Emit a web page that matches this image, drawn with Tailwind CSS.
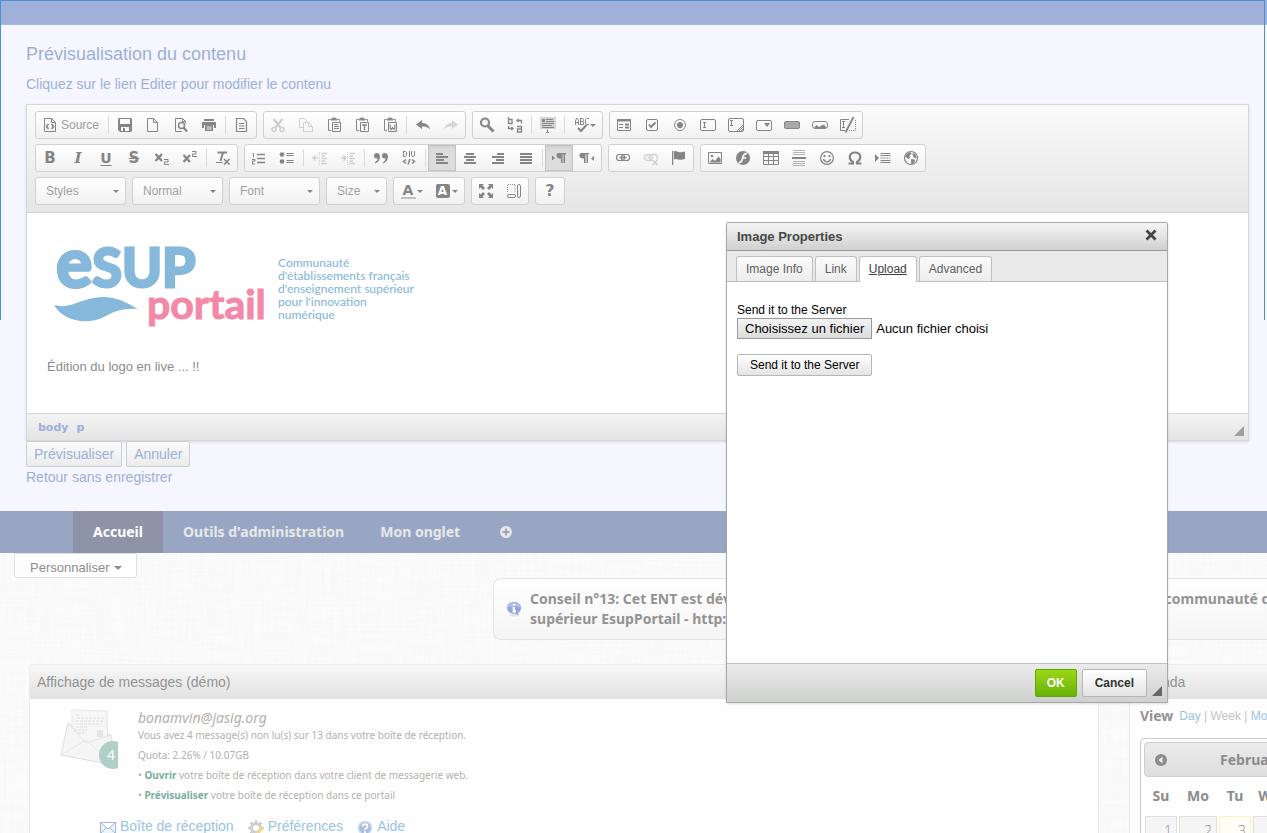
<!DOCTYPE html>
<html lang="fr">
<head>
<meta charset="utf-8">
<meta name="viewport" content="width=device-width, initial-scale=1">
<title>Prévisualisation du contenu</title>
<script src="https://cdn.jsdelivr.net/npm/@tailwindcss/browser@4"></script>
</head>
<body class="relative h-screen overflow-hidden bg-[#f9f9f9] font-['Liberation_Sans',sans-serif] text-sm text-[#8c8c8c]">

<!-- Icon set, 16 x 16 grid -->
<svg class="hidden" aria-hidden="true">
  <defs>
    <g id="source" fill="none" stroke="currentColor"><path d="M2.5 1.5h7l4 4v9h-11zM9.500 1.500v4h4"/><path stroke-width="1.600" d="M6.500 7 4.500 9.500l2 2.500M9.500 7l2 2.500-2 2.500"/></g>
    <g id="save"><path fill-rule="evenodd" fill="currentColor" d="M2 1h12l1 1v12l-1 1H3l-2-2V2zM3 2v5h10V2zM4 10v4h2v-3h2v3h4v-4z"/></g>
    <g id="newpage" fill="none" stroke="currentColor"><path d="M2.5 1.5h6l4 4v9h-10zM8.500 1.500v4h4"/></g>
    <g id="preview" fill="none" stroke="currentColor"><path d="M9 14.500H2.500v-13h7l3 3v2M9.500 1.500v3h3"/><circle cx="8.500" cy="8.500" r="3" stroke-width="1.500"/><path stroke-width="2" d="m10.500 10.500 3.500 4"/></g>
    <g id="print"><path fill="currentColor" fill-rule="evenodd" d="M3 2h10v2H3zM1 5h14v6h-2v-3H3v3H1z"/><path fill="currentColor" fill-rule="evenodd" d="M4 8h8v6H4zm1.500 1.500v1h5v-1zm0 2v1h5v-1z"/></g>
    <g id="templates" fill="none" stroke="currentColor"><path d="M2.500 1.500h7l3 3v10h-10zM5 6.500h5M5 9h5.500M5 11.500h5.500" stroke-width="1.200"/></g>
    <g id="cut" fill="none" stroke="currentColor" stroke-width="1.600"><circle cx="4" cy="12.500" r="2"/><circle cx="12" cy="12.500" r="2"/><path stroke-width="2.200" d="M3.500 2 10.500 10.500M12.500 2 5.500 10.500"/></g>
    <g id="copy" fill="none" stroke="currentColor"><path d="M5 10.500H1.500v-9h5l2.500 2.500v1"/><path d="M5.500 5.500h5l4 4v5h-9zM10.500 5.500v4h4"/></g>
    <g id="clip" fill="none" stroke="currentColor"><path d="M4.500 2.500h-2v11H5M11.500 2.500h2v2"/><path stroke-width="1.800" d="M5 2.500h6M6.500 1.500h3"/><path d="M6.500 5.500h8v9h-8z"/></g>
    <g id="paste"><use href="#clip"/><path stroke="currentColor" d="M8 7.500h4M8 9.500h5M8 11.500h5"/></g>
    <g id="pastetext"><use href="#clip"/><path stroke="currentColor" stroke-width="1.300" fill="none" d="M8 8h5M10.500 8v5"/></g>
    <g id="pasteword"><use href="#clip"/><path stroke="currentColor" stroke-width="1.200" fill="none" d="M8.200 7.500v4l1 1 1.300-2 1.300 2 1-1v-4"/></g>
    <g id="undo"><path fill="currentColor" d="M1 7.500 7 3v3c4.500 0 7 2.500 8 6.500-2-2.500-4.500-3-8-3V12z"/></g>
    <g id="redo"><path fill="currentColor" d="M15 7.500 9 3v3c-4.500 0-7 2.500-8 6.500 2-2.500 4.500-3 8-3V12z"/></g>
    <g id="find" fill="none" stroke="currentColor"><circle cx="6" cy="5.500" r="4" stroke-width="2.200"/><path stroke-width="3" d="m9 9 5.500 5.500"/></g>
    <g id="replace" fill="none" stroke="currentColor" stroke-width="1.300"><path d="M1.500 0v6.500h3.500v-4H1.500M10 9.500h4.500v5.500H10.500v-3h4M14.500 6.500v-3H10M11.500 2 10 3.500 11.500 5M1.500 9v2.500H6M4.500 10 6 11.500 4.500 13"/></g>
    <g id="selectall"><path fill="#d4d4d4" d="M0 0h16v12H0z"/><path stroke="currentColor" fill="none" d="M6 2.500h7M6 4.500h8M2 6.500h12M2 8.500h10M2 10.500h12M7.500 12.500v3M6 15.500h3"/><path fill="currentColor" d="M2 2h3v3H2z"/></g>
    <g id="spell" fill="none" stroke="currentColor"><path d="M1.500 8V3.500L2.500 1.500h1l1 2V8M1.500 5.500h3M6.500 1v7M6.500 1.500h2.500l.5 1v1l-.5 1h-2.500M9 4.500l.5 1v2H6.500M15 1.500h-2.500l-1 1v4l1 1H15"/><path stroke-width="2" d="m4 11 3 3 5.500-6"/></g>
    <g id="form" fill="none" stroke="currentColor"><path d="M1.500 2.500h13v11h-13zM3 7.500h4M3 10.500h4"/><path stroke-width="2" d="M1 3.500h14M9 7.500h4M9 10.500h4"/></g>
    <g id="checkbox" fill="none" stroke="currentColor"><rect x="2.500" y="2.500" width="11" height="11" rx="1.500"/><path stroke-width="2" d="m5 7.500 2 2.500 4.500-4.500"/></g>
    <g id="radio" stroke="currentColor"><circle cx="8" cy="8" r="5.500" fill="none"/><circle cx="8" cy="8" r="2.600" fill="currentColor"/></g>
    <g id="textfield" fill="none" stroke="currentColor"><rect x=".5" y="2.500" width="15" height="11" rx="1.500"/><path d="M3 5.500h3M4.500 5.500v5M3 10.500h3"/></g>
    <g id="textarea" fill="none" stroke="currentColor"><rect x=".5" y="1.500" width="15" height="13" rx="1.500"/><path d="M2 3.500h3M3.500 3.500v5M2 8.500h3M9 14l6-6M11 14l4-4M13 14l2-2"/></g>
    <g id="select"><rect x=".5" y="3.500" width="15" height="10" rx="1.500" fill="none" stroke="currentColor"/><path fill="currentColor" d="M8 6h6l-3 4z"/></g>
    <g id="button"><rect x=".5" y="4.500" width="15" height="7" rx="1.500" fill="#a8a8a8" stroke="currentColor"/></g>
    <g id="imgbutton"><rect x=".5" y="4.500" width="15" height="7" rx="2.500" fill="none" stroke="currentColor"/><path fill="currentColor" d="m2 11 2.500-3L7 10l2.500-1.500L12 7.500l2.500 3.500z"/></g>
    <g id="hidden" fill="none" stroke="currentColor"><path d="M9 2.500H.5v11H5M2 4.500h3M3.500 4.500v6M2 10.500h3"/><path stroke-dasharray="1 1" d="M9 13.500h6.500V2"/><path stroke-width="1.800" d="M13.500 0 5.500 15.500"/></g>
    <g id="sub" stroke="currentColor" fill="none"><path stroke-width="2.200" d="m1.500 4 6.500 7M8 4 1.500 11"/><path d="M10 9.500h4v2.500h-3.500v2.500H15"/></g>
    <g id="sup" stroke="currentColor" fill="none"><path stroke-width="2.200" d="m1.500 5 6.500 7M8 5 1.500 12"/><path d="M10 1.500h4V4h-3.500v2.500H15"/></g>
    <g id="removeformat" stroke="currentColor" fill="none"><path stroke-width="2" d="M2.500 2.500h9.500M8 2.500 5.500 11"/><path d="M1 12.500h6.500"/><path stroke-width="1.700" d="m9 9 5.500 5.500m0-5.500L9 14.500"/></g>
    <g id="ol" stroke="currentColor" fill="none"><path d="M1.500 3.500h1v4M1 9.500h3V11H1.500v3H4"/><path stroke-width="1.600" d="M6 4.500h8M6 8.500h8M6 12.500h8"/></g>
    <g id="ul"><circle cx="3" cy="4.500" r="2.300" fill="currentColor"/><circle cx="3" cy="11.500" r="2.300" fill="currentColor"/><path stroke="currentColor" d="M7.500 3.500h7M7.500 5.500h7M7.500 10.500h7M7.500 12.500h7"/></g>
    <g id="outdent" fill="none" stroke="currentColor"><path d="M7.500 2v13" stroke-dasharray="1 1"/><path stroke-width="1.300" d="M9.500 3.500H15M9.500 6H13M9.500 8.500H15M9.500 11H13M9.500 13.500H15M6 8H1M3.500 5.500 1 8l2.500 2.500"/></g>
    <g id="indent" fill="none" stroke="currentColor"><path d="M7.500 2v13" stroke-dasharray="1 1"/><path stroke-width="1.300" d="M9.500 3.500H15M9.500 6H13M9.500 8.500H15M9.500 11H13M9.500 13.500H15M1 8h5M3.500 5.500 6 8l-2.500 2.500"/></g>
    <g id="quote" fill="currentColor"><path d="M3.500 3C5.800 3 7 4.500 7 6.800 7 10 5 12.500 2 13.500v-1.200C3.700 11.300 4.600 10 4.600 8.500 2.500 8.900 1 7.800 1 5.800 1 4.200 2 3 3.500 3zM11.500 3C13.800 3 15 4.500 15 6.800c0 3.200-2 5.700-5 6.700v-1.200c1.700-1 2.600-2.300 2.600-3.800C10.500 8.900 9 7.800 9 5.800 9 4.200 10 3 11.500 3z"/></g>
    <g id="div" fill="none" stroke="currentColor"><path d="M2.500 1v5M2.500 1.500h2l1 1v3l-1 1h-2zM8.500 1v6M10.500 1v4l1 1.500h1l1-1.500V1"/><path stroke-width="1.500" d="M5 9.500 2.500 11.500 5 13.500M11 9.500l2.500 2-2.500 2M9 9l-2 5.500"/></g>
    <g id="left" fill="none" stroke="currentColor" stroke-width="2"><path d="M2 4h7M2 7h12M2 10h8M2 13h12"/></g>
    <g id="center" fill="none" stroke="currentColor" stroke-width="2"><path d="M4 4h8M2 7h12M4 10h8M2 13h12"/></g>
    <g id="right" fill="none" stroke="currentColor" stroke-width="2"><path d="M7 4h7M2 7h12M6 10h8M2 13h12"/></g>
    <g id="justify" fill="none" stroke="currentColor" stroke-width="2"><path d="M2 4h12M2 7h12M2 10h12M2 13h12"/></g>
    <g id="pilcrow"><path fill="currentColor" d="M5 3h8v1.200h-1V13h-1.500V4.200H9.500V13H8V8.500H7C5 8.500 3.500 7.500 3.500 5.700 3.500 4.200 4.200 3 5 3z"/></g>
    <g id="ltr"><use href="#pilcrow" x="2"/><path fill="currentColor" d="M1 5.500v5l3-2.500z"/></g>
    <g id="rtl"><use href="#pilcrow" x="-3"/><path fill="currentColor" d="M15 6v5l-3-2.500z"/></g>
    <g id="link" fill="none" stroke="currentColor" stroke-width="1.100"><rect x="1.500" y="4.500" width="8" height="6" rx="2.800"/><rect x="6.500" y="4.500" width="8" height="6" rx="2.800"/><path stroke-width="1.500" d="M4.500 7.500h7"/></g>
    <g id="unlink" fill="none" stroke="currentColor" stroke-width="1.300"><path d="M9.500 9.500c-1 1-2 1-4 1-2.500 0-4-1-4-3s1.500-3 4-3c1.500 0 3 0 4 1M7 9.500c-1-2 0-5 3-5h1.500c2 0 3 1.500 3 3 0 1-.5 1.500-1 2M4.500 7.500h6"/><path stroke-width="1.700" d="m9.500 10 5 5m0-5-5 5"/></g>
    <g id="anchor"><path fill="currentColor" d="M1 1h1.300v14H1zM3 1.500c2.500-1.500 4 1 6 .8 2 .2 3-.8 5-.8V9c-2 0-3 1-5 .8C7 9.800 5.500 8 3 9.500z"/></g>
    <g id="image"><path fill="none" stroke="currentColor" d="M1.500 2.500h13v11h-13z"/><circle cx="5" cy="6" r="1.300" fill="currentColor"/><path fill="currentColor" d="m2.500 12.500 3-3.500L8 11l3.500-4.500 2 2.500v3.500z"/></g>
    <g id="flash"><circle cx="8" cy="8" r="7" fill="currentColor"/><path fill="none" stroke="#f6f6f6" stroke-width="1.800" d="M12 3.500C8 3.500 8 7 7.500 8.500 7 11 6 12.500 4 12.500M7 7.800h4"/></g>
    <g id="table" fill="none" stroke="currentColor"><path stroke-width="3" d="M0 2.500h16"/><path d="M.5 4v10.500h15V4M.5 6.500h15M.5 10.500h15M5.500 4v10.500M10.500 4v10.500"/></g>
    <g id="hr" fill="none" stroke="currentColor"><path opacity=".6" d="M2 .5h12M2 2.500h12M2 4.500h12M2 11.500h12M2 13.500h12M2 15.500h12"/><path stroke-width="2" d="M1 8h14"/></g>
    <g id="smiley" fill="none" stroke="currentColor" stroke-width="1.200"><circle cx="8" cy="8" r="6.400"/><path d="M4.500 9c.7 2 2 2.800 3.500 2.800S10.800 11 11.500 9"/><path stroke-width="2" d="M5.500 5v2M10.500 5v2"/></g>
    <g id="omega" fill="none" stroke="currentColor" stroke-width="2.200"><path d="M1.500 13.500H6V12C1 9 2 2.500 8 2.500S15 9 10 12v1.500h4.500"/></g>
    <g id="pagebreak"><path fill="currentColor" d="M0 4v8l4-4z"/><path fill="none" stroke="currentColor" d="M5.500 3.500h10M5.500 5.500h10M5.500 10.500h10M5.500 12.500h10"/><path stroke="currentColor" stroke-dasharray="2 1" d="M5.500 8h10"/></g>
    <g id="globe"><circle cx="8" cy="8" r="6.500" fill="none" stroke="currentColor" stroke-width="1.200"/><path fill="currentColor" d="M4 3.500 7.500 2l1 2-2 1.500L7 8 5.500 9 2 6.500zM9.500 3 12 4l1.500 3-1 1.500-2.500-2zM8 9l3.500.5L12 11l-2 3H8.500L8 12z"/></g>
    <g id="maximize"><path fill="currentColor" d="M1 1h5L4.500 2.500 7 5 5 7 2.500 4.500 1 6zM15 1v5l-1.500-1.500L11 7 9 5l2.500-2.500L10 1zM1 15v-5l1.500 1.500L5 9l2 2-2.500 2.500L6 15zM15 15h-5l1.500-1.500L9 11l2-2 2.500 2.500L15 10z"/></g>
    <g id="blocks" fill="none" stroke="currentColor"><path stroke-dasharray="1 1" d="M1.500 9V1.500H9V9"/><rect x="1.500" y="11.500" width="8" height="3" rx="1.500"/><rect x="11.500" y="1.500" width="3" height="13" rx="1.500"/></g>
    <g id="arrow"><path fill="currentColor" d="M0 0h6L3 3z"/></g>
  </defs>
</svg>

<!-- Woven paper backdrop -->
<svg class="absolute inset-0 -z-10 size-full" aria-hidden="true">
  <filter id="weftH"><feTurbulence type="fractalNoise" baseFrequency=".02 .45" numOctaves="2" seed="3"/><feColorMatrix values="0 0 0 0 .75  0 0 0 0 .75  0 0 0 0 .75  .2 0 0 0 -.06"/></filter>
  <filter id="weftV"><feTurbulence type="fractalNoise" baseFrequency=".45 .02" numOctaves="2" seed="8"/><feColorMatrix values="0 0 0 0 .75  0 0 0 0 .75  0 0 0 0 .75  .2 0 0 0 -.06"/></filter>
  <rect width="100%" height="100%" fill="#fcfcfc"/>
  <rect width="100%" height="100%" filter="url(#weftH)"/>
  <rect width="100%" height="100%" filter="url(#weftV)"/>
</svg>

<div class="pointer-events-none absolute top-0 right-[2px] left-0 z-10 h-80 border border-b-0 border-[#4a90d9]"></div>

<header class="h-[25px] border-b border-[#a9b8de] bg-[#9fb0d9] shadow-sm"></header>

<main class="bg-[#f5f6ff] pr-[18px] pb-[23px] pl-[26px] pt-[17px] text-[#9db0da]">
  <h1 class="text-lg leading-6">Prévisualisation du contenu</h1>
  <p class="mt-2 mb-[10px] text-sm leading-5">Cliquez sur le lien Editer pour modifier le contenu</p>

  <section class="border border-[#d6d6d6] bg-white text-[#858585] shadow-sm">
    <div class="flex flex-col gap-[5px] border-b border-[#d6d6d6] bg-linear-to-b from-[#fafafa] to-[#e6e6e6] px-2 pt-[6px] pb-[7px] [&_div]:flex [&_div]:h-7 [&_div]:gap-[6px] [&_fieldset]:flex [&_fieldset]:items-center [&_fieldset]:rounded-[3px] [&_fieldset]:border [&_fieldset]:border-[#d0d0d0] [&_fieldset]:bg-linear-to-b [&_fieldset]:from-white [&_fieldset]:to-[#f1f1f1] [&_button]:flex [&_button]:h-[26px] [&_button]:min-w-7 [&_button]:items-center [&_button]:justify-center [&_svg]:size-4 [&_i]:mx-[2px] [&_i]:h-[18px] [&_i]:w-px [&_i]:bg-[#dadada]">
      <div>
        <fieldset>
          <button class="gap-[3px] pr-[7px] pl-[6px] text-xs text-[#a0a0a0]"><svg class="text-[#858585]"><use href="#source"/></svg>Source</button><i></i>
          <button title="Save"><svg><use href="#save"/></svg></button>
          <button title="New Page"><svg><use href="#newpage"/></svg></button>
          <button title="Preview"><svg><use href="#preview"/></svg></button>
          <button title="Print"><svg><use href="#print"/></svg></button><i></i>
          <button title="Templates"><svg><use href="#templates"/></svg></button>
        </fieldset>
        <fieldset>
          <button title="Cut" class="text-[#cfcfcf]"><svg><use href="#cut"/></svg></button>
          <button title="Copy" class="text-[#cfcfcf]"><svg><use href="#copy"/></svg></button>
          <button title="Paste"><svg><use href="#paste"/></svg></button>
          <button title="Paste as plain text"><svg><use href="#pastetext"/></svg></button>
          <button title="Paste from Word"><svg><use href="#pasteword"/></svg></button><i></i>
          <button title="Undo"><svg><use href="#undo"/></svg></button>
          <button title="Redo" class="text-[#d4d4d4]"><svg><use href="#redo"/></svg></button>
        </fieldset>
        <fieldset>
          <button title="Find"><svg><use href="#find"/></svg></button>
          <button title="Replace"><svg><use href="#replace"/></svg></button><i></i>
          <button title="Select All"><svg><use href="#selectall"/></svg></button><i></i>
          <button title="Spell Check" class="w-[35px]"><svg><use href="#spell"/></svg><svg class="max-h-[3px] max-w-[6px]" viewBox="0 0 6 3"><use href="#arrow"/></svg></button>
        </fieldset>
        <fieldset>
          <button title="Form"><svg><use href="#form"/></svg></button>
          <button title="Checkbox"><svg><use href="#checkbox"/></svg></button>
          <button title="Radio Button"><svg><use href="#radio"/></svg></button>
          <button title="Text Field"><svg><use href="#textfield"/></svg></button>
          <button title="Textarea"><svg><use href="#textarea"/></svg></button>
          <button title="Selection Field"><svg><use href="#select"/></svg></button>
          <button title="Button"><svg><use href="#button"/></svg></button>
          <button title="Image Button"><svg><use href="#imgbutton"/></svg></button>
          <button title="Hidden Field"><svg><use href="#hidden"/></svg></button>
        </fieldset>
      </div>
      <div>
        <fieldset class="text-base font-bold">
          <button title="Bold" class="font-['DejaVu_Sans',sans-serif] text-[15px]">B</button>
          <button title="Italic" class="font-['DejaVu_Serif',serif] text-[15px] italic">I</button>
          <button title="Underline" class="font-['DejaVu_Sans',sans-serif] text-sm underline underline-offset-2">U</button>
          <button title="Strikethrough" class="font-['DejaVu_Sans',sans-serif] text-[15px] line-through">S</button>
          <button title="Subscript"><svg><use href="#sub"/></svg></button>
          <button title="Superscript"><svg><use href="#sup"/></svg></button><i></i>
          <button title="Remove Format"><svg><use href="#removeformat"/></svg></button>
        </fieldset>
        <fieldset>
          <button title="Numbered List"><svg><use href="#ol"/></svg></button>
          <button title="Bulleted List"><svg><use href="#ul"/></svg></button><i></i>
          <button title="Decrease Indent" class="text-[#d0d0d0]"><svg><use href="#outdent"/></svg></button>
          <button title="Increase Indent" class="text-[#d0d0d0]"><svg><use href="#indent"/></svg></button><i></i>
          <button title="Block Quote"><svg><use href="#quote"/></svg></button>
          <button title="Div Container"><svg><use href="#div"/></svg></button><i></i>
          <button title="Align Left" aria-pressed="true" class="bg-[#dcdcdc] inset-shadow-sm inset-ring inset-ring-[#c8c8c8]"><svg><use href="#left"/></svg></button>
          <button title="Center"><svg><use href="#center"/></svg></button>
          <button title="Align Right"><svg><use href="#right"/></svg></button>
          <button title="Justify"><svg><use href="#justify"/></svg></button><i></i>
          <button title="Left to right" aria-pressed="true" class="bg-[#dcdcdc] inset-shadow-sm inset-ring inset-ring-[#c8c8c8]"><svg><use href="#ltr"/></svg></button>
          <button title="Right to left"><svg><use href="#rtl"/></svg></button>
        </fieldset>
        <fieldset>
          <button title="Link"><svg><use href="#link"/></svg></button>
          <button title="Unlink" class="text-[#d0d0d0]"><svg><use href="#unlink"/></svg></button>
          <button title="Anchor"><svg><use href="#anchor"/></svg></button>
        </fieldset>
        <fieldset>
          <button title="Image"><svg><use href="#image"/></svg></button>
          <button title="Flash"><svg><use href="#flash"/></svg></button>
          <button title="Table"><svg><use href="#table"/></svg></button>
          <button title="Horizontal Line"><svg><use href="#hr"/></svg></button>
          <button title="Smiley"><svg><use href="#smiley"/></svg></button>
          <button title="Special Character"><svg><use href="#omega"/></svg></button>
          <button title="Page Break"><svg><use href="#pagebreak"/></svg></button>
          <button title="IFrame"><svg><use href="#globe"/></svg></button>
        </fieldset>
      </div>
      <div class="[&_label]:relative [&_label]:flex [&_label]:items-center [&_select]:h-[26px] [&_select]:w-full [&_select]:appearance-none [&_select]:pl-[10px] [&_select]:text-xs [&_select]:text-[#a0a0a0] [&_label>svg]:absolute [&_label>svg]:right-[6px] [&_label>svg]:h-[3px] [&_label>svg]:w-[6px]">
        <fieldset class="w-[91px]"><label class="w-full"><select aria-label="Styles"><option>Styles</option></select><svg viewBox="0 0 6 3"><use href="#arrow"/></svg></label></fieldset>
        <fieldset class="w-[91px]"><label class="w-full"><select aria-label="Paragraph format"><option>Normal</option></select><svg viewBox="0 0 6 3"><use href="#arrow"/></svg></label></fieldset>
        <fieldset class="w-[91px]"><label class="w-full"><select aria-label="Font"><option>Font</option></select><svg viewBox="0 0 6 3"><use href="#arrow"/></svg></label></fieldset>
        <fieldset class="w-[61px]"><label class="w-full"><select aria-label="Size"><option>Size</option></select><svg viewBox="0 0 6 3"><use href="#arrow"/></svg></label></fieldset>
        <fieldset class="font-['DejaVu_Sans',sans-serif] font-bold">
          <button title="Text Color" class="w-[35px] gap-px"><span class="h-[15px] w-[15px] border-b-2 border-[#c0c0c0] text-sm leading-3">A</span><svg class="max-h-[3px] max-w-[6px]" viewBox="0 0 6 3"><use href="#arrow"/></svg></button>
          <button title="Background Color" class="w-[35px] gap-[2px]"><span class="h-[14px] w-[14px] rounded-[2px] bg-[#858585] text-xs leading-[14px] text-white">A</span><svg class="max-h-[3px] max-w-[6px]" viewBox="0 0 6 3"><use href="#arrow"/></svg></button>
        </fieldset>
        <fieldset>
          <button title="Maximize"><svg><use href="#maximize"/></svg></button>
          <button title="Show Blocks"><svg><use href="#blocks"/></svg></button>
        </fieldset>
        <fieldset>
          <button title="About" class="font-['DejaVu_Sans',sans-serif] text-base font-bold">?</button>
        </fieldset>
      </div>
    </div>

    <div class="h-[200px] px-5 pt-5">
      <svg class="h-[105px] w-[380px]" viewBox="0 0 380 105" role="img" aria-label="esup portail">
        <g fill="#86b8dc" stroke="#86b8dc" font-family="Lato, sans-serif" font-weight="700">
          <text x="9" y="54" font-size="54" stroke-width="3"><tspan font-size="68">e</tspan>SUP</text>
          <path stroke="none" d="M7 72c16 5 29-8 48-8 18 0 26 7 36 12-18-1-24 3-34 8-19 9-42 3-50-12z"/>
        </g>
        <text x="100" y="86" font-family="Lato, sans-serif" font-size="41" font-weight="700" fill="#f389a6" stroke="#f389a6">portail</text>
        <g fill="#86b8dc" font-family="Lato, sans-serif" font-size="12" font-weight="500">
          <text x="231" y="34">Communauté</text><text x="231" y="47">d'établissements français</text><text x="231" y="60">d'enseignement supérieur</text><text x="231" y="73">pour l'innovation</text><text x="231" y="86">numérique</text>
        </g>
      </svg>
      <p class="mt-[19px] text-[13px] leading-5 text-[#8c8c8c]">Édition du logo en live ... !!</p>
    </div>
    <footer class="flex h-[27px] items-center justify-between border-t border-[#d6d6d6] bg-linear-to-b from-[#f3f3f3] to-[#e4e4e4] pr-1 pl-[11px] font-['DejaVu_Sans',sans-serif] text-[11px] font-bold text-[#9db0da]">
      <nav class="flex gap-2 pt-px"><a href="#">body</a><a href="#">p</a></nav>
      <svg class="mb-1 size-[10px] self-end text-[#a0a0a0]" viewBox="0 0 10 10"><path fill="currentColor" d="M10 0v10H0z"/></svg>
    </footer>
  </section>

  <div class="flex gap-1">
    <button class="h-[26px] rounded-[2px] border border-[#cfcfcf] bg-linear-to-b from-[#fafafa] to-[#ececec] px-[7px] text-sm">Prévisualiser</button>
    <button class="h-[26px] rounded-[2px] border border-[#cfcfcf] bg-linear-to-b from-[#fafafa] to-[#ececec] px-[7px] text-sm">Annuler</button>
  </div>
  <a href="#" class="block text-sm leading-[21px]">Retour sans enregistrer</a>
</main>

<nav class="flex h-[42px] items-center bg-[#98a6c4] pl-[73px] font-['Noto_Sans',sans-serif] text-sm font-bold text-[#e8e8e8]">
  <a href="#" aria-current="page" class="flex h-full items-center bg-[#8e94a7] px-5 text-white">Accueil</a>
  <a href="#" class="px-5">Outils d'administration</a>
  <a href="#" class="pr-5 pl-4">Mon onglet</a>
  <button title="Ajouter un onglet" class="px-5"><svg class="size-3" viewBox="0 0 12 12"><circle cx="6" cy="6" r="6" fill="currentColor"/><path stroke="#98a6c4" stroke-width="2" d="M6 2.500v7M2.500 6h7"/></svg></button>
</nav>

<button class="ml-[14px] flex h-[25px] items-center gap-1 rounded-b-[3px] border border-[#e0e0e0] bg-white pt-[5px] pr-[14px] pl-[15px] text-[13px]">Personnaliser<svg class="h-1 w-2" viewBox="0 0 8 4"><path fill="currentColor" d="M0 0h8L4 4z"/></svg></button>

<aside class="ml-[493px] flex h-[62px] items-center gap-2 overflow-hidden rounded-l-lg border border-r-0 border-[#e2e2e2] bg-linear-to-b from-white to-[#f5f5f5] pl-3 font-['Noto_Sans',sans-serif] text-sm leading-5 font-bold text-[#939393]">
  <svg class="size-4 shrink-0" viewBox="0 0 16 16"><ellipse cx="8" cy="14" rx="5" ry="1.500" fill="#e4e4e4"/><path fill="#93a6e0" d="M8 1c4 0 7 2.500 7 6 0 2.500-1.500 4-3 5l.5 2.500-3-1.700C4.500 13 1 10.500 1 7s3-6 7-6z"/><path fill="#b6c3ee" d="M8 2c3.500 0 6 2 6 4-4-1-8-1-12 0 0-2 2.500-4 6-4z"/><path stroke="#fff" stroke-width="2" d="M8 3v2M8 6v5M6.500 7H8M6.500 10.500h3.500"/></svg>
  <p class="whitespace-nowrap">Conseil n°13: Cet ENT est développé, entretenu et amélioré en continu par l'ensemble de la communauté d'enseignement<br>supérieur EsupPortail - http://www.esup-portail.org</p>
</aside>

<div class="mt-6 flex items-start gap-[30px] pl-[29px]">
  <section class="min-w-0 flex-1 rounded-t-[3px] border border-[#ebebeb] bg-[#fefefe]">
    <h2 class="h-[34px] bg-linear-to-b from-[#f7f7f7] to-[#e2e2e2] pl-[7px] text-sm leading-[35px] text-[#939393]">Affichage de messages (démo)</h2>
    <div class="flex gap-5 pt-[10px] pl-[30px]">
      <svg class="h-[60px] w-[58px]" viewBox="0 0 58 60">
        <path fill="#f6f6f6" stroke="#e6e6e6" d="m12 1 35 1 1 34-36-2z"/><path stroke="#dcdcdc" stroke-dasharray="3 1" d="M16 6h3M17 9h27M16 12h27M16 15h25M16 18h12M14 21h13M14 24h12"/><path fill="#e4e4e4" d="M37 21h6v7h-6z"/>
        <path fill="#ededed" stroke="#e4e4e4" d="M8 14 13 18V32L26 36 48 28 48 24 51 26 56 56 1 46z"/><path fill="#f5f5f5" stroke="#e2e2e2" d="m8 14 18 20 25-8 3 30L1 46z"/><path fill="none" stroke="#e6e6e6" d="m1 46 25-15 28 25"/>
        <circle cx="53" cy="46" r="14" fill="#aed0c6"/><text x="47" y="51" font-size="14" font-family="Noto Sans, sans-serif" fill="#fff">4</text>
      </svg>
      <div class="font-['Noto_Sans',sans-serif] text-[10px] leading-5 text-[#b5b0ad] [&_a]:font-bold [&_a]:text-[#77b09c]">
        <h3 class="-mb-[2px] text-sm leading-[18px] italic">bonamvin@jasig.org</h3>
        <p>Vous avez 4 message(s) non lu(s) sur 13 dans votre boîte de réception.</p>
        <p>Quota: 2.26% / 10.07GB</p>
        <p>• <a href="#">Ouvrir</a> votre boîte de réception dans votre client de messagerie web.</p>
        <p>• <a href="#">Prévisualiser</a> votre boîte de réception dans ce portail</p>
      </div>
    </div>
    <div class="mt-3 flex h-10 gap-[14px] pl-[70px] text-sm leading-[18px] text-[#9cc3e6] [&_a]:flex [&_a]:gap-1 [&_svg]:mt-[3px] [&_svg]:size-4">
      <a href="#"><svg viewBox="0 0 16 16"><path fill="#eef4fc" stroke="#a3b5da" d="M.5 2.500h15v11H.5zm0 0L8 9l7.500-6.500M.5 13.500 6 8m9.500 5.500L10 8"/></svg>Boîte de réception</a>
      <a href="#"><svg viewBox="0 0 16 16"><circle cx="8" cy="8" r="4.500" fill="none" stroke="#cfcfcf" stroke-width="3"/><path stroke="#cfcfcf" stroke-width="2.500" d="M8 0v3M8 13v3M0 8h3M13 8h3M2.500 2.500l2 2M13.500 2.500l-2 2M2.500 13.500l2-2"/><path stroke="#f0d598" stroke-width="3" d="m9 14 6-7"/></svg>Préférences</a>
      <a href="#"><svg viewBox="0 0 16 16"><circle cx="8" cy="8" r="6.500" fill="#a9bfe2" stroke="#d4dced" stroke-width="1.500"/><path fill="none" stroke="#fff" stroke-width="1.800" d="M5.500 6.500c0-3 5-3 5 0 0 1.500-2.500 1.500-2.500 3.500M8 11v2"/></svg>Aide</a>
    </div>
  </section>

  <section class="w-[138px] shrink-0 overflow-hidden border border-r-0 border-[#ebebeb] bg-[#fefefe]">
    <h2 class="h-[34px] bg-linear-to-b from-[#f7f7f7] to-[#e2e2e2] pl-[7px] text-sm leading-[35px] text-[#939393]">Agenda</h2>
    <div class="w-[300px] pt-[7px] pl-[10px]">
      <p class="flex items-center gap-1 text-xs leading-5 text-[#c4c4c4] [&_a]:text-[#9cc3e6]"><b class="font-['Noto_Sans',sans-serif] text-sm leading-5 text-[#939393]">View</b><span class="ml-[2px]"><a href="#">Day</a> | Week | <a href="#">Month</a></span></p>
      <div class="mt-3 rounded-[4px] border border-[#c9c9c9] p-[3px] font-['Noto_Sans',sans-serif] text-sm text-[#8c8c8c]">
        <div class="flex h-[35px] items-center rounded-[4px] border border-[#cfcfcf] bg-linear-to-b from-[#ebebeb] to-[#dedede] pl-[10px] font-bold">
          <button title="Previous"><svg class="size-3" viewBox="0 0 12 12"><circle cx="6" cy="6" r="6" fill="currentColor"/><path fill="#eee" d="M7.500 2.500v7L3.500 6z"/></svg></button><span class="ml-[53px]">February 2015</span>
        </div>
        <table class="mt-[3px] -ml-px border-separate border-spacing-x-[2px] [&_td]:h-8 [&_td]:border [&_td]:border-[#dedede] [&_td]:bg-[#f5f5f5] [&_td]:pt-1 [&_td]:pr-1 [&_td]:text-right [&_td]:align-top [&_td]:font-['Open_Sans',sans-serif] [&_td]:font-light [&_th]:h-9 [&_th]:pb-1">
          <thead><tr><th class="min-w-8">Su</th><th class="min-w-[38px]">Mo</th><th class="min-w-8">Tu</th><th class="min-w-8">We</th><th class="min-w-8">Th</th></tr></thead>
          <tbody><tr><td>1</td><td>2</td><td class="border-[#fbf2bd]! bg-[#fffdf4]!">3</td><td>4</td><td>5</td></tr></tbody>
        </table>
      </div>
    </div>
  </section>
</div>

<!-- Image Properties dialog -->
<div role="dialog" aria-labelledby="dlg-title" class="absolute top-[222px] right-[99px] z-20 flex h-[481px] w-[442px] flex-col rounded-t-[2px] border border-[#a8a8a8] bg-white text-xs text-black shadow">
  <div class="flex h-7 shrink-0 items-center justify-between border-b border-[#999] bg-linear-to-b from-[#f5f5f5] to-[#cfd1cf] pr-[10px] pl-[10px]">
    <h2 id="dlg-title" class="text-[13px] font-bold text-[#474747]">Image Properties</h2>
    <button title="Close" class="-mt-1"><svg class="size-3" viewBox="0 0 12 12"><path stroke="#444" stroke-width="2.800" d="m1.500 1.500 9 9m0-9-9 9"/></svg></button>
  </div>
  <div role="tablist" class="flex h-[31px] shrink-0 items-end gap-[2px] border-b border-[#bfbfbf] bg-[#e9e9e9] pl-[9px] text-[#606060] [&_button]:h-[25px] [&_button]:rounded-t-[3px] [&_button]:border [&_button]:border-b-0 [&_button]:border-[#bfbfbf] [&_button]:px-[9px]">
    <button role="tab" class="bg-linear-to-b from-[#fafafa] to-[#ededed]">Image Info</button>
    <button role="tab" class="bg-linear-to-b from-[#fafafa] to-[#ededed]">Link</button>
    <button role="tab" aria-selected="true" class="-mb-px h-[26px]! bg-white pb-px text-[#404040] underline">Upload</button>
    <button role="tab" class="bg-linear-to-b from-[#fafafa] to-[#ededed]">Advanced</button>
  </div>
  <div class="flex-1 px-[10px] pt-[21px]">
    <label for="upload" class="block leading-[15px]">Send it to the Server</label>
    <div class="mb-[15px] flex items-center gap-1 text-[13px]">
      <label for="upload" class="flex h-[21px] items-center border border-[#999] bg-linear-to-b from-[#f4f4f4] to-[#dcdcdc] px-[7px]">Choisissez un fichier</label>
      <input id="upload" type="file" class="sr-only"><span>Aucun fichier choisi</span>
    </div>
    <button class="h-[22px] rounded-[2px] border border-[#b6b6b6] bg-linear-to-b from-white to-[#e4e4e4] px-3">Send it to the Server</button>
  </div>
  <div class="flex h-[39px] shrink-0 items-center justify-end gap-[5px] border-t border-[#bfbfbf] bg-linear-to-b from-[#ebebeb] to-[#cfd1cf] pr-[5px] font-bold">
    <button class="h-7 rounded-[2px] border border-[#62a60a] bg-linear-to-b from-[#9ad717] to-[#69b10b] px-[11px] text-white">OK</button>
    <button class="h-7 rounded-[2px] border border-[#b6b6b6] bg-linear-to-b from-white to-[#e4e4e4] px-3 text-[#333]">Cancel</button>
    <svg class="mb-[6px] size-[10px] self-end" viewBox="0 0 10 10"><path fill="#666" d="M10 0v10H0z"/></svg>
  </div>
</div>
</body>
</html>
